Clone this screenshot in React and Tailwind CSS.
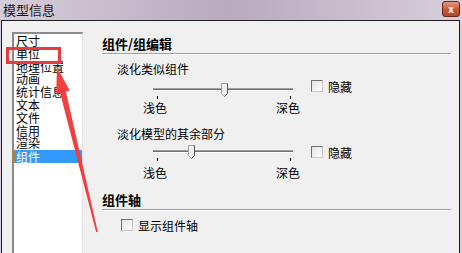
import React from 'react';

const items = ['尺寸', '单位', '地理位置', '动画', '统计信息', '文本', '文件', '信用', '渲染', '组件'];

function Slider({ pos }) {
  // track + pentagon thumb + two tick marks
  return (
    <svg width="146" height="19" viewBox="0 0 146 19" className="shrink-0">
      <rect x="3" y="6" width="140" height="1" fill="#a0a0a0" />
      <rect x="3" y="7" width="140" height="1" fill="#707070" />
      <rect x="3" y="8" width="140" height="1" fill="#ffffff" />
      <path d={`M${pos}.5 1.5 h6 v10 l-3 3 l-3 -3 z`} fill="#f0f0f0" stroke="#a0a0a0" />
      <path d={`M${pos + 6}.5 1.5 v10 l-3 3`} fill="none" stroke="#505050" />
      <rect x="7" y="14" width="1" height="3" fill="#000" />
      <rect x="140" y="14" width="1" height="3" fill="#000" />
    </svg>
  );
}

function Check({ className = '' }) {
  return (
    <div className={`w-[12px] h-[12px] shrink-0 border border-t-[#6f6f6f] border-l-[#6f6f6f] border-r-[#c8c8c8] border-b-[#c8c8c8] bg-gradient-to-br from-[#e4e4e4] to-white ${className}`} />
  );
}

export default function App() {
  return (
    <div
      className="relative w-[462px] h-[253px] overflow-hidden flex flex-col bg-gradient-to-r from-[#d6cdda] via-[#b9aabe] to-[#d7cfdb] text-black"
      style={{ fontFamily: '"Noto Sans CJK SC", "Noto Sans", sans-serif' }}
    >
      {/* title bar */}
      <div className="h-[20px] shrink-0 flex items-start justify-between">
        <div className="pl-[3px] pt-[1px] text-[13px] leading-[17px] text-[#1a1a1a]">模型信息</div>
        <div className="mt-[1px] mr-[2px] w-[18px] h-[16px] rounded-[3px] border border-[#6b2416] bg-gradient-to-b from-[#e49a80] via-[#cc5a3c] to-[#b5442b] flex items-center justify-center text-white text-[10px] font-bold leading-none">
          x
        </div>
      </div>

      {/* body */}
      <div className="flex-1 ml-[1px] mr-[2px] border border-b-0 border-[#1e1e1e] bg-[#f0f0f0] flex min-h-0">
        {/* list */}
        <div className="ml-[10px] mt-[11px] w-[71px] shrink-0 border-l-2 border-t-2 border-r border-l-[#8a8a8a] border-t-[#8a8a8a] border-r-[#e3e3e3] bg-white pt-[1px] text-[12px]">
          {items.map((t, i) => (
            <div
              key={t}
              className={
                i === items.length - 1
                  ? 'h-[12.8px] leading-[12.8px] pl-[1px] bg-[#3399ff] text-white border border-dotted border-[#c87a2e]'
                  : 'h-[12.8px] leading-[12.8px] pl-[2px]'
              }
            >
              {t}
            </div>
          ))}
        </div>

        {/* right panel */}
        <div className="flex-1 ml-[19px] mr-[8px] flex flex-col text-[12px]">
          <div className="mt-[14px] h-[17px] leading-[17px] text-[13px] font-bold">组件/组编辑</div>
          <div className="mt-[1px] h-px bg-[#a0a0a0]" />
          <div className="h-px bg-white" />

          <div className="mt-[6px] h-[15px] leading-[15px] pl-[15px]">淡化类似组件</div>
          <div className="mt-[4px] h-[21px] flex items-start">
            <div className="ml-[48px] mt-[2px]">
              <Slider pos={71} />
            </div>
            <Check className="ml-[15px]" />
            <span className="ml-[5px] leading-[13px]">隐藏</span>
          </div>
          <div className="h-[14px] leading-[14px] flex pl-[41px]">
            <span className="w-[133px]">浅色</span>
            <span>深色</span>
          </div>

          <div className="mt-[11px] h-[15px] leading-[15px] pl-[15px]">淡化模型的其余部分</div>
          <div className="h-[25px] flex items-start">
            <div className="ml-[48px] mt-[3px]">
              <Slider pos={38} />
            </div>
            <Check className="ml-[15px] mt-[5px]" />
            <span className="ml-[5px] mt-[5px] leading-[13px]">隐藏</span>
          </div>
          <div className="h-[14px] leading-[14px] flex pl-[41px]">
            <span className="w-[133px]">浅色</span>
            <span>深色</span>
          </div>

          <div className="mt-[11px] h-[17px] leading-[17px] text-[13px] font-bold">组件轴</div>
          <div className="mt-[1px] h-px bg-[#a0a0a0]" />
          <div className="h-px bg-white" />
          <div className="mt-[8px] flex items-start pl-[19px]">
            <Check />
            <span className="ml-[5px] leading-[13px]">显示组件轴</span>
          </div>
        </div>
      </div>

      {/* annotation overlay */}
      <svg className="absolute left-0 top-0 pointer-events-none" width="462" height="253">
        <rect x="7.5" y="48.5" width="52" height="14" fill="none" stroke="#ea3a3f" strokeWidth="3" />
        <polygon
          points="57,67 69.8,90.7 65.9,91.6 97.8,231.8 96.2,232.2 60.1,93 56.2,93.9"
          fill="#f0403f"
        />
      </svg>
    </div>
  );
}
